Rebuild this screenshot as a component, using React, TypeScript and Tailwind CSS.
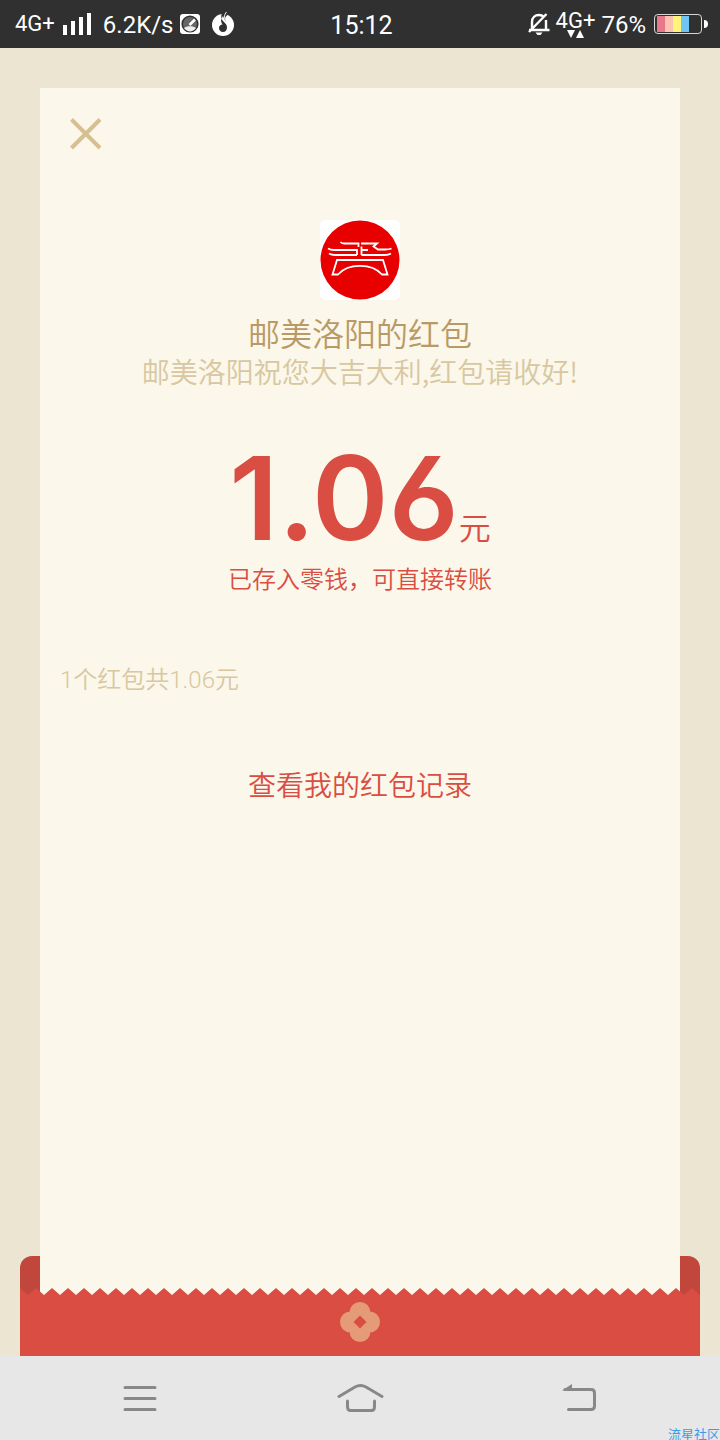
const signalBars = ['h-[10px]', 'h-[14px]', 'h-[18px]', 'h-[22px]'];

const batteryCells = ['bg-[#e8788a]', 'bg-[#fcc4b0]', 'bg-[#fdf57a]', 'bg-[#70c4f4]'];

const StatusBar = () => (
    <header className="grid h-12 grid-cols-[1fr_auto_1fr] items-center bg-[#303030] pr-3 pl-[15px] font-['Roboto',sans-serif] text-white">
        <div className="flex items-center">
            <span className="text-[22px] leading-6">4G+</span>
            <div className="ml-2 flex h-[22px] items-end gap-1">
                {signalBars.map((height) => (
                    <i key={height} className={`w-1 bg-white ${height}`} />
                ))}
            </div>
            <span className="ml-3 pt-0.5 text-2xl leading-8">6.2K/s</span>
            <svg className="ml-1.5 size-5" viewBox="0 0 20 20">
                <rect width="20" height="20" rx="3" fill="#fff" />
                <circle cx="10" cy="10" r="7.800" fill="#666" stroke="#303030" strokeWidth="1.6" />
                <path d="M4 14C7 11.500 13 11.500 16 14C13 18.500 7 18.500 4 14Z" fill="#eee" />
                <path d="M9.500 11L15 5.500" stroke="#fff" strokeWidth="2.500" />
            </svg>
            <svg className="ml-3 h-6 w-[22px]" viewBox="0 0 22 24">
                <circle cx="11" cy="13" r="11" fill="#fff" />
                <path d="M10.500 0C8.500 4 9 7 11.500 9.500C13.500 11.500 15 13 15 15.500C15 18 13.500 20 11 20C8.500 20 7 18 7 16C7 14 8.500 12.500 10.500 12.500C10.500 12.500 9 10.500 9 8L11 4L13.500 9.500C12.500 6 13.500 4 15.500 3L15 0Z" fill="#303030" />
                <path d="M14.500 0C12 3 12 5.500 13.500 8" stroke="#fff" fill="none" />
            </svg>
        </div>
        <span className="pt-1 text-[25px] leading-8">15:12</span>
        <div className="flex items-center justify-end">
            <svg className="h-6 w-[22px]" viewBox="0 0 22 24" fill="none" stroke="#fff" strokeWidth="2.400">
                <path d="M1 18H21.500M4 17V10C4 5.500 7 3 11 3C13 3 15 4 16 5M18 8V17M18.500 2L1 20" />
                <path d="M7.500 20.500H14.500L12.500 23H9.500Z" fill="#fff" stroke="none" />
            </svg>
            <div className="ml-1.5 flex flex-col items-center">
                <span className="text-[22px] leading-5">4G+</span>
                <svg className="-mt-px h-2 w-[17px]" viewBox="0 0 17 8" fill="#fff">
                    <path d="M0 0H8L4 8ZM13 0L17 8H9Z" />
                </svg>
            </div>
            <span className="ml-1.5 pt-0.5 text-2xl leading-8">76%</span>
            <div className="ml-2 flex h-5 w-12 rounded-[4px] border border-white/80 p-px pl-0.5">
                {batteryCells.map((color) => (
                    <i key={color} className={`w-2 ${color}`} />
                ))}
            </div>
            <i className="ml-0.5 h-2 w-1 rounded-r-full bg-white" />
        </div>
    </header>
);

const Avatar = () => (
    <svg className="size-20" viewBox="0 0 80 80" role="img" aria-label="邮美洛阳">
        <rect width="80" height="80" rx="5" fill="#fff" />
        <circle cx="40" cy="40" r="39.500" fill="#e80000" />
        <g fill="none" stroke="#fff" strokeWidth="1.800">
            <path d="M20.500 22C21.500 23.200 22.500 23.500 24 23.500H38.500V27" />
            <path d="M41 23.500H57L53.500 26.500L58 29.500H65C68 29.500 69.500 29.500 71.500 28.500" />
            <path d="M8 28.500C10 29.700 11.500 30 14 30H37V35" />
            <path d="M41.500 26.500V35M41.500 30H48" />
            <path d="M9 33.500C11 34.700 12 35 15 35H37M41.500 35H65C68 35 69 34.700 71 33.500" />
            <path d="M17 40H63L67.500 54.500H62C52 43 28 43 18 54.500H12.500L17 40Z" />
        </g>
    </svg>
);

const Envelope = () => (
    <footer>
        <div className="flex h-10">
            <div className="w-5 rounded-tl-xl bg-[#c1463c]" />
            <div className="flex-1 bg-[#fbf7ea]" />
            <div className="w-5 rounded-tr-xl bg-[#c1463c]" />
        </div>
        <svg className="relative -mt-2 block h-2 w-full">
            <defs>
                <pattern id="teeth" width="16" height="8" patternUnits="userSpaceOnUse">
                    <path d="M0 0L8 7L16 0V8H0Z" fill="#d94d42" />
                </pattern>
            </defs>
            <rect width="100%" height="8" fill="url(#teeth)" />
        </svg>
        <div className="flex h-15 justify-center bg-[#d94d42] pt-1.5">
            <svg className="size-10" viewBox="0 0 40 40" fill="#e59a78">
                <circle cx="20" cy="10.500" r="10.500" />
                <circle cx="20" cy="29.500" r="10.500" />
                <circle cx="10.500" cy="20" r="10.500" />
                <circle cx="29.500" cy="20" r="10.500" />
                <path d="M20 13.500L26.500 20L20 26.500L13.500 20Z" fill="#d94d42" />
            </svg>
        </div>
    </footer>
);

const NavBar = () => (
    <nav className="relative flex h-21 items-center bg-[#e7e7e7] px-[30px] text-[#888]">
        <button type="button" aria-label="菜单" className="flex flex-1 justify-center">
            <svg className="h-8 w-9" viewBox="0 0 36 32" stroke="currentColor" strokeWidth="3" strokeLinecap="round">
                <path d="M3 5.500H33M3 16.500H33M3 27.500H33" />
            </svg>
        </button>
        <button type="button" aria-label="主页" className="flex flex-1 justify-center">
            <svg className="h-8 w-12" viewBox="0 0 48 32" fill="none" stroke="currentColor" strokeWidth="3" strokeLinecap="round">
                <path d="M3 14.500L19 5Q24.500 2 30 5L46 14.500M11.500 19V24.500Q11.500 28.500 14.500 28.500H35.500Q38.500 28.500 38.500 24.500V19" />
            </svg>
        </button>
        <button type="button" aria-label="返回" className="flex flex-1 justify-center">
            <svg className="h-8 w-9" viewBox="0 0 36 32" fill="none" stroke="currentColor" strokeWidth="3" strokeLinecap="round">
                <path d="M3 7.500H29Q32.500 7.500 32.500 11V24Q32.500 27.500 29 27.500H6.500" />
                <path d="M0 8.500L10 2V8.500Z" fill="currentColor" stroke="none" />
            </svg>
        </button>
        <span className="absolute right-0 bottom-0 text-[13px] leading-3 text-[#3f9bea]">流星社区</span>
    </nav>
);

const App = () => (
    <div className="flex min-h-screen flex-col font-['Noto_Sans_CJK_SC',sans-serif]">
        <StatusBar />
        <main className="flex flex-1 flex-col bg-[#ece5d2] px-5 pt-10">
            <section className="mx-5 flex flex-1 flex-col bg-[#fbf7ea] px-5">
                <button type="button" aria-label="关闭" className="mt-[30px] ml-2.5 size-8 text-[#d6bf90]">
                    <svg viewBox="0 0 32 32" stroke="currentColor" strokeWidth="4">
                        <path d="M1.500 1.500L30 30M30 1.500L1.500 30" />
                    </svg>
                </button>
                <div className="mt-[70px] flex flex-col items-center">
                    <Avatar />
                    <h1 className="mt-3 text-[32px] leading-10 font-[350] text-[#b99a66]">邮美洛阳的红包</h1>
                    <p className="text-[28px] leading-[38px] font-[350] text-[#d8c7a0]">邮美洛阳祝您大吉大利,红包请收好!</p>
                    <p className="mt-11 flex items-baseline text-[#d94d42]">
                        <strong className="font-['Inter',sans-serif] text-[116px] leading-[128px] font-semibold [font-feature-settings:'cv03','ss01']">1.06</strong>
                        <span className="text-[32px] leading-10 font-[350]">元</span>
                    </p>
                    <p className="text-2xl leading-8 font-[350] text-[#d94d42]">已存入零钱，可直接转账</p>
                </div>
                <p className="mt-[66px] font-['Roboto','Noto_Sans_CJK_SC',sans-serif] text-2xl leading-10 font-[350] text-[#d8c7a0]">1个红包共1.06元</p>
                <a href="#records" className="mt-16 self-center text-[28px] leading-10 font-[350] text-[#d94d42]">
                    查看我的红包记录
                </a>
            </section>
            <Envelope />
        </main>
        <NavBar />
    </div>
);

export default App;
